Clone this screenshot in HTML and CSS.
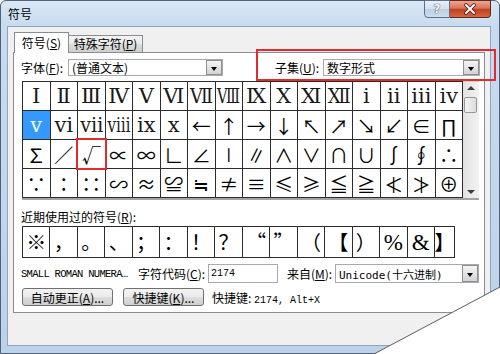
FILE: index.html
```html
<!DOCTYPE html>
<html lang="zh-CN">
<head>
  <meta charset="UTF-8">
  <title>符号</title>
  <link rel="stylesheet" href="styles.css">
</head>
<body>
  <div class="window">
    <div class="titlebar">
      <span class="title">符号</span>
      <div class="caption">
        <span class="cap-btn help">?</span>
        <span class="cap-btn close">
          <svg width="14" height="12" viewBox="0 0 14 12">
            <path d="M3 2 L11 10 M11 2 L3 10" stroke="#4a1a12" stroke-width="3.6" stroke-linecap="round"/>
            <path d="M3 2 L11 10 M11 2 L3 10" stroke="#fff" stroke-width="2" stroke-linecap="round"/>
          </svg>
        </span>
      </div>
    </div>

    <div class="client">
      <div class="tabs">
        <div class="tab active">符号(<u>S</u>)</div>
        <div class="tab">特殊字符(<u>P</u>)</div>
      </div>

      <div class="panel">
        <div class="font-row">
          <div class="field">
            <label>字体(<u>F</u>):</label>
            <div class="combo font-combo"><span>(普通文本)</span><i class="drop"></i></div>
          </div>
          <div class="field subset">
            <label>子集(<u>U</u>):</label>
            <div class="combo subset-combo"><span>数字形式</span><i class="drop"></i></div>
          </div>
        </div>

        <div class="symbols">
          <div class="grid">
            <div class="cell rn"><span>Ⅰ</span></div>
            <div class="cell rn"><span>Ⅱ</span></div>
            <div class="cell rn"><span>Ⅲ</span></div>
            <div class="cell rn"><span>Ⅳ</span></div>
            <div class="cell rn"><span>Ⅴ</span></div>
            <div class="cell rn"><span>Ⅵ</span></div>
            <div class="cell rn"><span>Ⅶ</span></div>
            <div class="cell rn"><span>Ⅷ</span></div>
            <div class="cell rn"><span>Ⅸ</span></div>
            <div class="cell rn"><span>Ⅹ</span></div>
            <div class="cell rn"><span>Ⅺ</span></div>
            <div class="cell rn"><span>Ⅻ</span></div>
            <div class="cell rn"><span>ⅰ</span></div>
            <div class="cell rn"><span>ⅱ</span></div>
            <div class="cell rn"><span>ⅲ</span></div>
            <div class="cell rn"><span>ⅳ</span></div>

            <div class="cell rn sel"><span>ⅴ</span></div>
            <div class="cell rn"><span>ⅵ</span></div>
            <div class="cell rn"><span>ⅶ</span></div>
            <div class="cell rn"><span>ⅷ</span></div>
            <div class="cell rn"><span>ⅸ</span></div>
            <div class="cell rn"><span>ⅹ</span></div>
            <div class="cell"><span>←</span></div>
            <div class="cell"><span>↑</span></div>
            <div class="cell"><span>→</span></div>
            <div class="cell"><span>↓</span></div>
            <div class="cell"><span>↖</span></div>
            <div class="cell"><span>↗</span></div>
            <div class="cell"><span>↘</span></div>
            <div class="cell"><span>↙</span></div>
            <div class="cell"><span>∈</span></div>
            <div class="cell"><span>∏</span></div>

            <div class="cell"><span>∑</span></div>
            <div class="cell"><span>∕</span></div>
            <div class="cell mark"><span>√</span></div>
            <div class="cell"><span>∝</span></div>
            <div class="cell"><span>∞</span></div>
            <div class="cell"><span>∟</span></div>
            <div class="cell"><span>∠</span></div>
            <div class="cell"><span>∣</span></div>
            <div class="cell"><span>∥</span></div>
            <div class="cell"><span>∧</span></div>
            <div class="cell"><span>∨</span></div>
            <div class="cell"><span>∩</span></div>
            <div class="cell"><span>∪</span></div>
            <div class="cell"><span>∫</span></div>
            <div class="cell"><span>∮</span></div>
            <div class="cell"><span>∴</span></div>

            <div class="cell"><span>∵</span></div>
            <div class="cell"><span>∶</span></div>
            <div class="cell"><span>∷</span></div>
            <div class="cell"><span>∽</span></div>
            <div class="cell"><span>≈</span></div>
            <div class="cell"><span>≌</span></div>
            <div class="cell"><span>≒</span></div>
            <div class="cell"><span>≠</span></div>
            <div class="cell"><span>≡</span></div>
            <div class="cell"><span>≤</span></div>
            <div class="cell"><span>≥</span></div>
            <div class="cell"><span>≦</span></div>
            <div class="cell"><span>≧</span></div>
            <div class="cell"><span>≮</span></div>
            <div class="cell"><span>≯</span></div>
            <div class="cell"><span>⊕</span></div>
          </div>
          <div class="scrollbar">
            <div class="sb-arrow up"></div>
            <div class="sb-thumb"></div>
            <div class="sb-space"></div>
            <div class="sb-arrow down"></div>
          </div>
        </div>

        <div class="recent-label">近期使用过的符号(<u>R</u>):</div>
        <div class="recent">
          <div class="cell"><span>※</span></div>
          <div class="cell"><span>，</span></div>
          <div class="cell"><span>。</span></div>
          <div class="cell"><span>、</span></div>
          <div class="cell"><span>；</span></div>
          <div class="cell"><span>：</span></div>
          <div class="cell"><span>！</span></div>
          <div class="cell"><span>？</span></div>
          <div class="cell"><span>“</span></div>
          <div class="cell"><span>”</span></div>
          <div class="cell"><span>（</span></div>
          <div class="cell"><span>【</span></div>
          <div class="cell"><span>）</span></div>
          <div class="cell latin"><span>%</span></div>
          <div class="cell latin"><span>&amp;</span></div>
          <div class="cell"><span>】</span></div>
        </div>

        <div class="info-row">
          <span class="char-name">SMALL ROMAN NUMERA…</span>
          <label class="code-label">字符代码(<u>C</u>):</label>
          <div class="input">2174</div>
          <label class="from-label">来自(<u>M</u>):</label>
          <div class="combo from-combo"><span>Unicode(十六进制)</span><i class="drop"></i></div>
        </div>

        <div class="btn-row">
          <div class="btn btn-auto">自动更正(<u>A</u>)...</div>
          <div class="btn btn-key">快捷键(<u>K</u>)...</div>
          <span class="shortcut">快捷键: <span class="mono">2174, Alt+X</span></span>
        </div>
      </div>
    </div>
  </div>

  <svg class="curl" width="500" height="354" viewBox="0 0 500 354">
    <polygon points="374,354 500,287 500,354" fill="#fff"/>
    <line x1="374" y1="354" x2="500" y2="287" stroke="#5c5c5c" stroke-width="1"/>
  </svg>

  <script src="script.js"></script>
</body>
</html>
```

FILE: styles.css
```css
* { margin: 0; padding: 0; box-sizing: border-box; }

body {
  position: relative;
  width: 500px;
  height: 354px;
  overflow: hidden;
  background: #fff;
  font-family: "Noto Sans CJK SC", sans-serif;
  font-size: 12px;
  color: #000;
}

u { text-decoration: underline; text-underline-offset: 1px; }

.window {
  width: 500px;
  height: 354px;
  display: flex;
  flex-direction: column;
  padding: 0 8px 7px 6px;
  border: 1px solid #4f6279;
  border-radius: 6px 6px 0 0;
  background: linear-gradient(180deg, #dae7f5 0, #c8dbef 24px, #bcd2ea 100%);
}

/* title bar */
.titlebar {
  height: 25px;
  display: flex;
  justify-content: space-between;
  align-items: flex-start;
}

.title {
  padding: 5px 0 0 1px;
  line-height: 16px;
}

.caption {
  display: flex;
  margin-top: -1px;
}

.cap-btn {
  height: 18px;
  display: flex;
  align-items: center;
  justify-content: center;
  border: 1px solid #5d7089;
}

.help {
  width: 26px;
  border-radius: 0 0 0 4px;
  background: linear-gradient(180deg, #e8eff8 0, #d3e0ee 48%, #bccfe4 52%, #cbdcee 100%);
  color: #fff;
  font-family: "DejaVu Sans", sans-serif;
  font-weight: bold;
  font-size: 12px;
  text-shadow: 0 0 1px #23344a, 0 0 1px #23344a;
}

.close {
  width: 41px;
  border-left: none;
  border-color: #5e2a20;
  border-radius: 0 0 4px 0;
  background: linear-gradient(180deg, #e9a894 0, #d9735a 45%, #c4401f 52%, #d56445 100%);
}

/* client */
.client {
  flex: 1;
  border: 1px solid #8ea3bc;
  background: #f0f0f0;
  padding: 5px 5px 0 5px;
}

.tabs {
  display: flex;
  align-items: flex-end;
  height: 20px;
  padding-left: 1px;
  position: relative;
  z-index: 1;
}

.tab {
  width: 74px;
  height: 17px;
  border: 1px solid #898c95;
  border-bottom: none;
  border-left: none;
  background: linear-gradient(180deg, #f3f3f3 0, #ebebeb 50%, #dddddd 50%, #cfcfcf 100%);
  text-align: center;
  line-height: 15px;
}

.tab.active {
  width: 55px;
  height: 21px;
  margin-bottom: -1px;
  border-left: 1px solid #898c95;
  background: #fff;
  line-height: 19px;
}

.panel {
  height: 261px;
  border: 1px solid #898c95;
  background: #fff;
  display: flex;
  flex-direction: column;
}

/* font / subset */
.font-row {
  display: flex;
  justify-content: space-between;
  height: 17px;
  margin-top: 6px;
  padding: 0 4px 0 7px;
}

.field {
  display: flex;
  align-items: center;
}

.field label { width: 47px; white-space: nowrap; }
.subset label { width: 48px; }

.subset { position: relative; }

.subset::after {
  content: "";
  position: absolute;
  top: -10px;
  bottom: -5px;
  left: -19px;
  right: -16px;
  border: 2px solid #e12b2f;
}

.combo {
  height: 17px;
  display: flex;
  align-items: center;
  justify-content: space-between;
  padding-left: 3px;
  border: 1px solid #a6abb3;
  background: #fff;
  white-space: nowrap;
}

.font-combo { width: 155px; }
.subset-combo { width: 157px; }

.drop {
  position: relative;
  width: 16px;
  height: 15px;
  border: 1px solid #8f8f8f;
  background: linear-gradient(180deg, #f4f4f4, #d3d3d3);
}

.drop::after {
  content: "";
  position: absolute;
  left: 4px;
  top: 6px;
  border-left: 3.5px solid transparent;
  border-right: 3.5px solid transparent;
  border-top: 4px solid #000;
}

/* symbol grid */
.symbols {
  display: flex;
  width: 457px;
  margin: 5px 0 0 8px;
  border-bottom: 2px solid #a3a3a3;
}

.grid {
  display: grid;
  width: 441px;
  grid-template-columns: repeat(16, 1fr);
  grid-template-rows: repeat(4, 28px);
  gap: 1px;
  border: 1px solid #2c2c2c;
  background: #2c2c2c;
}

.cell {
  display: flex;
  align-items: center;
  justify-content: center;
  overflow: hidden;
  background: #fff;
  font-family: "Noto Sans CJK SC", sans-serif;
  font-size: 19px;
  line-height: 1;
}

.cell span { display: inline-block; white-space: nowrap; }

.cell.rn {
  font-family: "DejaVu Serif", "Liberation Serif", serif;
  font-size: 21px;
  color: #1a1a1a;
}

.cell.sel {
  background: #3399ff;
  color: #fff;
}

.cell.mark {
  position: relative;
  z-index: 1;
  overflow: visible;
  outline: 2px solid #e12b2f;
}

.scrollbar {
  width: 16px;
  display: flex;
  flex-direction: column;
  border-top: 1px solid #d0d0d0;
  background: linear-gradient(90deg, #e2e2e2, #f2f2f2);
}

.sb-arrow {
  position: relative;
  height: 15px;
}

.sb-arrow::after {
  content: "";
  position: absolute;
  left: 4px;
  border-left: 4px solid transparent;
  border-right: 4px solid transparent;
}

.sb-arrow.up::after { top: 4px; border-bottom: 4px solid #3c3c3c; }
.sb-arrow.down::after { top: 7px; border-top: 4px solid #3c3c3c; }

.sb-thumb {
  height: 16px;
  margin: 0 2px 0 1px;
  border: 1px solid #979797;
  border-radius: 2px;
  background: linear-gradient(90deg, #f4f4f4, #dcdcdc);
}

.sb-space { flex: 1; }

/* recent */
.recent-label {
  margin: 10px 0 0 7px;
  line-height: 14px;
}

.recent {
  display: grid;
  width: 433px;
  height: 32px;
  margin: 2px 0 0 8px;
  grid-template-columns: repeat(15, 1fr) 19px;
  gap: 1px;
  border: 1px solid #2c2c2c;
  background: #2c2c2c;
}

.recent .cell { font-size: 20px; }

.recent .cell.latin {
  font-family: "Liberation Serif", serif;
  font-size: 23px;
}

/* info row */
.info-row {
  display: flex;
  align-items: center;
  height: 21px;
  margin: 5px 0 0 7px;
}

.char-name {
  width: 117px;
  font-family: "Liberation Mono", monospace;
  font-size: 10.5px;
  letter-spacing: -0.7px;
  white-space: nowrap;
}

.code-label { width: 70px; white-space: nowrap; }

.input {
  width: 70px;
  height: 19px;
  padding-left: 2px;
  border: 1px solid #a6abb3;
  background: #fff;
  font-family: "Liberation Mono", monospace;
  font-size: 10px;
  line-height: 17px;
}

.from-label { width: 48px; margin-left: 9px; white-space: nowrap; }

.from-combo {
  width: 144px;
  height: 19px;
  font-family: "DejaVu Sans Mono", "Noto Sans CJK SC", monospace;
  font-size: 11px;
}

.from-combo .drop { height: 17px; }
.from-combo .drop::after { top: 7px; }

/* buttons */
.btn-row {
  display: flex;
  align-items: center;
  height: 18px;
  margin: 4px 0 0 8px;
}

.btn {
  height: 18px;
  display: flex;
  align-items: center;
  justify-content: center;
  border: 1px solid #707070;
  border-radius: 3px;
  background: linear-gradient(180deg, #f2f2f2 0, #ebebeb 50%, #dddddd 50%, #cfcfcf 100%);
  white-space: nowrap;
}

.btn-auto { width: 91px; }
.btn-key { width: 81px; margin-left: 10px; }

.shortcut { margin-left: 8px; white-space: nowrap; }

.mono {
  font-family: "Liberation Mono", monospace;
  font-size: 10px;
}

/* page curl over the corner */
.curl {
  position: absolute;
  left: 0;
  top: 0;
  pointer-events: none;
}
```

FILE: script.js
```js
// squeeze wide glyphs (roman numerals) so they fit their cell
document.querySelectorAll('.grid .cell span').forEach(function (s) {
  var w = s.getBoundingClientRect().width;
  if (w > 23) {
    s.style.transform = 'scaleX(' + (23 / w).toFixed(3) + ')';
  }
});
```
